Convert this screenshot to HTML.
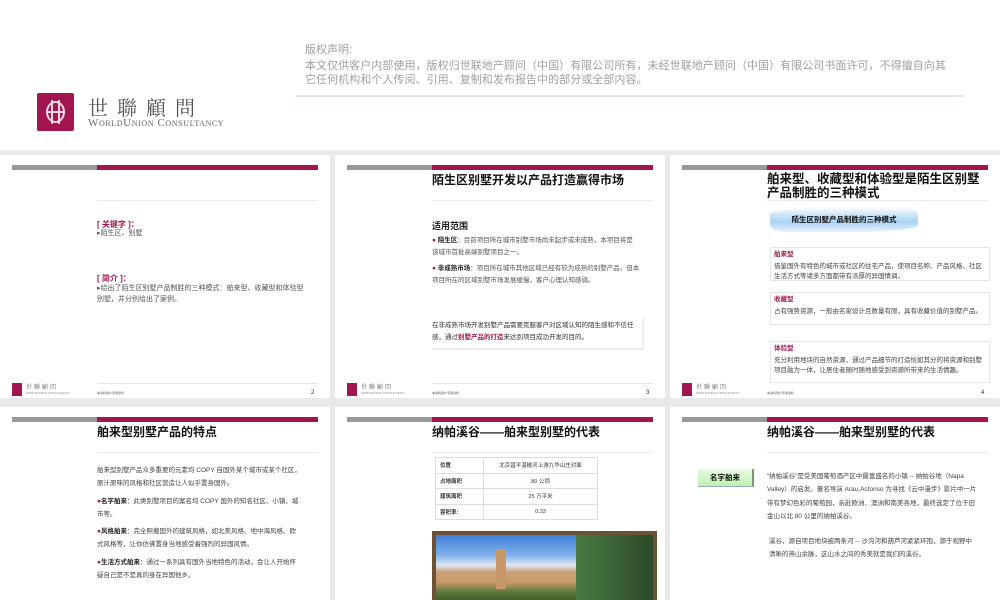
<!DOCTYPE html>
<html><head><meta charset="utf-8"><style>
*{margin:0;padding:0;box-sizing:border-box}
body{width:1000px;height:600px;background:#e9e9e9;position:relative;overflow:hidden;font-family:"Liberation Sans","Noto Sans CJK SC",sans-serif}
.a{position:absolute}
.top{left:0;top:0;width:1000px;height:150px;background:#fff}
.s{position:absolute;width:330px;background:#fff;overflow:hidden}
.g{position:absolute;left:12px;top:10px;width:85px;height:5px;background:#999}
.m{position:absolute;left:97px;top:10px;width:221px;height:5px;background:#a3154f}
.hl{position:absolute;left:97px;top:45px;width:221px;height:1px;background:#ececf0}
.fl{position:absolute;left:97px;top:228px;width:221px;height:1px;background:#e6e6e6}
.t{position:absolute;left:97px;top:17px;font-size:12px;font-weight:bold;color:#111;line-height:17px}
.lg{position:absolute;left:12px;top:228px;width:10px;height:13px;background:#a3154f}
.lgt{position:absolute;left:26px;top:227px;font-size:6px;color:#666;font-family:"Liberation Serif","Noto Serif CJK SC",serif;letter-spacing:2px}
.lgw{position:absolute;left:26px;top:236px;font-size:3px;color:#888}
.fn{position:absolute;left:97px;top:236px;font-size:3px;color:#555}
.pn{position:absolute;left:311px;top:235px;font-size:6px;color:#333}
.x{font-size:7px;color:#555;line-height:12px;position:absolute}
.bx{position:absolute;left:100px;width:220px;border:1px solid #e6e6e6;padding:2px 3px;font-size:6.5px;color:#444;line-height:10px}
.bx b{color:#a3154f;display:block;margin-bottom:2px}
td{border:1px solid #cfe0ee;font-size:5.5px;color:#333;height:15.5px;padding-left:4px}
</style></head><body>
<div class="a top">
 <div class="a" style="left:305px;top:41px;font-size:11px;color:#a0a0a0">版权声明:</div>
 <div class="a" style="left:305px;top:60px;font-size:11px;color:#a0a0a0;line-height:13.5px;width:646px;letter-spacing:0.05px">本文仅供客户内部使用，版权归世联地产顾问（中国）有限公司所有，未经世联地产顾问（中国）有限公司书面许可，不得擅自向其它任何机构和个人传阅、引用、复制和发布报告中的部分或全部内容。</div>
 <div class="a" style="left:296px;top:95px;width:668px;height:2px;background:#f1dfe5"></div>
 <div class="a" style="left:37px;top:93px;width:37px;height:38px;background:#a3154f;border-radius:2px">
  <div class="a" style="left:9px;top:8px;width:19px;height:22px;border:2px solid #f3d9e2;border-radius:50%"></div>
  <div class="a" style="left:14px;top:7px;width:1.5px;height:24px;background:#f3d9e2"></div>
  <div class="a" style="left:21px;top:7px;width:1.5px;height:24px;background:#f3d9e2"></div>
  <div class="a" style="left:11px;top:18px;width:15px;height:1.5px;background:#f3d9e2"></div>
 </div>
 <div class="a" style="left:88px;top:92px;font-size:20px;letter-spacing:9px;color:#555;font-family:'Liberation Serif','Noto Serif CJK SC',serif">世聯顧問</div>
 <div class="a" style="left:88px;top:117px;font-size:11px;color:#666;font-family:'Liberation Serif',serif;font-variant:small-caps;letter-spacing:0.6px">WorldUnion Consultancy</div>
</div>

<!-- slide 2 -->
<div class="s" style="left:0;top:155px;height:243px">
 <div class="g"></div><div class="m"></div><div class="hl"></div>
 <div class="a" style="left:97px;top:64px;font-size:8px;color:#a3154f;font-weight:bold">[ 关键字 ]：</div>
 <div class="x" style="left:97px;top:73px;font-size:7px">▸陌生区、别墅</div>
 <div class="a" style="left:97px;top:118px;font-size:8px;color:#a3154f;font-weight:bold">[ 简介 ]：</div>
 <div class="x" style="left:97px;top:128px;width:212px;line-height:11px">▸给出了陌生区别墅产品制胜的三种模式：舶来型、收藏型和体验型别墅，并分别给出了案例。</div>
 <div class="fl"></div><div class="lg"></div><div class="lgt">世聯顧問</div><div class="lgw">WORLDUNION CONSULTANCY</div><div class="fn">本资料用户专用资料</div><div class="pn">2</div>
</div>

<!-- slide 3 -->
<div class="s" style="left:335px;top:155px;height:243px">
 <div class="g"></div><div class="m"></div><div class="hl"></div>
 <div class="t">陌生区别墅开发以产品打造赢得市场</div>
 <div class="a" style="left:97px;top:64px;font-size:9px;font-weight:bold;color:#222">适用范围</div>
 <div class="x" style="left:97px;top:80px;width:207px;font-size:6.5px"><span style="color:#a3154f">●</span> <b style="color:#222">陌生区</b>：目前项目所在城市别墅市场尚未起步或未成熟，本项目将是该城市首批高端别墅项目之一。</div>
 <div class="x" style="left:97px;top:108px;width:210px;font-size:6.5px"><span style="color:#a3154f">●</span> <b style="color:#222">非成熟市场</b>：项目所在城市其他区域已经有较为成熟的别墅产品，但本项目所在的区域别墅市场发展缓慢，客户心理认知感弱。</div>
 <div class="x" style="left:97px;top:163px;width:212px;height:32px;font-size:6.5px;line-height:12px;color:#333;border-right:2px solid #f6e8ef;border-bottom:2px solid #f6e8ef;padding-top:2px">在非成熟市场开发别墅产品需要克服客户对区域认知的陌生感和不信任感，通过<span style="color:#a3154f;font-weight:bold">别墅产品的打造</span>来达到项目成功开发的目的。</div>
 <div class="fl"></div><div class="lg"></div><div class="lgt">世聯顧問</div><div class="lgw">WORLDUNION CONSULTANCY</div><div class="fn">本资料用户专用资料</div><div class="pn">3</div>
</div>

<!-- slide 4 -->
<div class="s" style="left:670px;top:155px;height:243px">
 <div class="g"></div><div class="m"></div><div class="hl"></div>
 <div class="t" style="width:218px;line-height:14px;font-size:12.5px">舶来型、收藏型和体验型是陌生区别墅产品制胜的三种模式</div>
 <div class="a" style="left:100px;top:52px;width:148px;height:25px;background:linear-gradient(#fff,#cfe6f8 30%,#a9d3f3 60%,#e8f3fc);border-radius:40% 10% 40% 10%/30% 30% 30% 30%;font-size:7.5px;font-weight:bold;color:#111;text-align:center;line-height:25px">陌生区别墅产品制胜的三种模式</div>
 <div class="bx" style="top:92px;height:34px"><b>舶来型</b>借鉴国外有特色的城市或社区的住宅产品，使项目名称、产品风格、社区生活方式等诸多方面都带有浓厚的异国情调。</div>
 <div class="bx" style="top:137px;height:33px"><b>收藏型</b>占有强势资源，一般由名家设计且数量有限，具有收藏价值的别墅产品。</div>
 <div class="bx" style="top:186px;height:42px"><b>体验型</b>充分利用地块的自然资源，通过产品细节的打造恰如其分的将资源和别墅项目融为一体，让居住者随时随地感受到资源所带来的生活情趣。</div>
 <div class="lg"></div><div class="lgt">世聯顧問</div><div class="lgw">WORLDUNION CONSULTANCY</div><div class="fn">本资料用户专用资料</div><div class="pn">4</div>
</div>

<!-- slide 5 -->
<div class="s" style="left:0;top:407px;height:193px">
 <div class="g"></div><div class="m"></div><div class="hl"></div>
 <div class="t">舶来型别墅产品的特点</div>
 <div class="x" style="left:97px;top:57px;width:204px;font-size:6.5px;line-height:13.3px;color:#444">舶来型别墅产品众多重要的元素均 COPY 自国外某个城市或某个社区，原汁原味的风格和社区营造让人似乎置身国外。<br><span style="display:block;height:4px"></span><span style="color:#a3154f">●</span><b style="color:#222">名字舶来</b>：此类别墅项目的案名均 COPY 国外的知名社区、小镇、城市等。<br><span style="display:block;height:4px"></span><span style="color:#a3154f">●</span><b style="color:#222">风格舶来</b>：完全照搬国外的建筑风格，如北美风格、地中海风格、欧式风格等，让你仿佛置身当地感受着强烈的异国风情。<br><span style="display:block;height:4px"></span><span style="color:#a3154f">●</span><b style="color:#222">生活方式舶来</b>：通过一系列具有国外当地特色的活动，会让人开始怀疑自己是不是真的身在异国他乡。</div>
</div>

<!-- slide 6 -->
<div class="s" style="left:335px;top:407px;height:193px">
 <div class="g"></div><div class="m"></div><div class="hl"></div>
 <div class="t">纳帕溪谷——舶来型别墅的代表</div>
 <table class="a" style="left:100px;top:50px;width:163px;border-collapse:collapse">
  <tr><td style="width:48px;font-weight:bold">位置</td><td style="text-align:center;padding:0">北京昌平温榆河上游九华山庄对面</td></tr>
  <tr><td style="font-weight:bold">占地面积</td><td style="text-align:center;padding:0">80 公顷</td></tr>
  <tr><td style="font-weight:bold">建筑面积</td><td style="text-align:center;padding:0">25 万平米</td></tr>
  <tr><td style="font-weight:bold">容积率:</td><td style="text-align:center;padding:0">0.33</td></tr>
 </table>
 <div class="a" style="left:97px;top:124px;width:225px;height:75px;background:#6b5236;padding:4px">
  <div style="width:100%;height:100%;background:linear-gradient(#3f7fd8,#7fb0ea 30%,#dfe8f2 45%,#c9a27a 55%,#c99b6a 70%,#5a7a3a 85%,#3e5a2a);position:relative">
   <div class="a" style="left:140px;top:0;width:77px;height:70px;background:linear-gradient(90deg,#4a7a44,#2c4a2a)"></div>
   <div class="a" style="left:60px;top:14px;width:10px;height:40px;background:#c89668"></div>
  </div>
 </div>
</div>

<!-- slide 7 -->
<div class="s" style="left:670px;top:407px;height:193px">
 <div class="g"></div><div class="m"></div><div class="hl"></div>
 <div class="t">纳帕溪谷——舶来型别墅的代表</div>
 <div class="a" style="left:28px;top:62px;width:56px;height:18px;background:linear-gradient(#e9fbe3,#bff0b0);border-right:2px solid #7a9a70;border-bottom:1px solid #9ab;font-size:7.5px;font-weight:bold;text-align:center;line-height:18px;color:#111">名字舶来</div>
 <div class="x" style="left:97px;top:63px;width:212px;font-size:6.5px;line-height:13.3px;color:#444">“纳帕溪谷”是受美国葡萄酒产区中最富盛名的小镇 -- 纳帕谷地（Napa Valley）的启发。著名导演 Arau.Acfonso 为寻找《云中漫步》影片中一片带有梦幻色彩的葡萄园，亲赴欧洲、澳洲和南美各地，最终选定了位于旧金山以北 80 公里的纳帕溪谷。</div>
 <div class="x" style="left:99px;top:128px;width:206px;font-size:6.5px;line-height:13.3px;color:#444">溪谷，源自项目地块被两条河 -- 沙沟河和葫芦河紧紧环抱，源于视野中清晰的燕山余脉，这山水之间的秀美就是我们的溪谷。</div>
</div>
</body></html>
